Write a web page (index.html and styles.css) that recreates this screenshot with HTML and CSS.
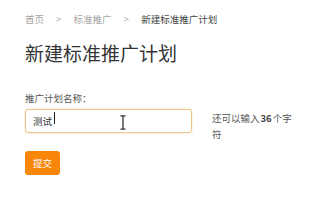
FILE: index.html
```html
<!DOCTYPE html>
<html lang="zh-CN">
<head>
  <meta charset="UTF-8">
  <title>新建标准推广计划</title>
  <link rel="stylesheet" href="styles.css">
</head>
<body>
  <div class="page">
    <div class="crumbs">
      <span class="crumb">首页</span>
      <span class="sep">&gt;</span>
      <span class="crumb">标准推广</span>
      <span class="sep">&gt;</span>
      <span class="crumb current">新建标准推广计划</span>
    </div>

    <h1>新建标准推广计划</h1>

    <form class="plan-form">
      <label class="field-label" for="planName">推广计划名称：</label>
      <div class="field-row">
        <div class="input-wrap">
          <input type="text" id="planName" value="测试">
          <span class="caret"></span>
          <svg class="ibeam" width="6" height="15" viewBox="0 0 6 15">
            <path d="M0.5 0.8 H5.5 M3 0.8 V14.2 M0.5 14.2 H5.5" stroke="#333" stroke-width="1.3" fill="none"/>
          </svg>
        </div>
        <div class="hint">还可以输入<b>36</b>个字<br>符</div>
      </div>
      <button type="button">提交</button>
    </form>
  </div>
</body>
</html>
```

FILE: styles.css
```css
html * {
  font-family: "Microsoft YaHei", "Noto Sans CJK SC", sans-serif;
}

body {
  margin: 0;
  background: #fff;
}

.page {
  padding: 9px 0 0 25px;
}

.crumbs {
  display: flex;
  align-items: center;
  font-size: 9.5px;
  line-height: 20px;
  color: #a5a5a5;
}

.crumbs .sep {
  margin: 0 12px;
  font-size: 10px;
  color: #b0b0b0;
}

.crumbs .current {
  color: #444;
}

h1 {
  margin: 10px 0 0 0;
  font-size: 19px;
  line-height: 28px;
  font-weight: normal;
  color: #333;
}

.plan-form {
  margin-top: 24px;
}

.field-label {
  display: block;
  font-size: 9.5px;
  line-height: 14px;
  color: #555;
}

.field-row {
  display: flex;
  align-items: flex-start;
  margin-top: 1px;
}

.input-wrap {
  position: relative;
}

.input-wrap input {
  box-sizing: border-box;
  width: 167px;
  height: 24px;
  padding: 0 0 0 7px;
  border: 1px solid #eec58a;
  border-radius: 3px;
  box-shadow: 0 0 2px rgba(240, 180, 100, 0.45);
  font-size: 9.5px;
  color: #333;
  outline: none;
  caret-color: transparent;
}

.input-wrap .caret {
  position: absolute;
  left: 29px;
  top: 6px;
  width: 1px;
  height: 12px;
  background: #222;
}

.input-wrap .ibeam {
  position: absolute;
  left: 95px;
  top: 9px;
}

.hint {
  width: 88px;
  margin: 4px 0 0 20px;
  font-size: 9.5px;
  line-height: 16px;
  color: #555;
}

.hint b {
  margin: 0 1px;
  font-weight: bold;
  color: #444;
}

button {
  display: block;
  margin-top: 9px;
  height: 24px;
  padding: 0 8px;
  border: none;
  border-radius: 3px;
  background: #f7860b;
  color: #fff;
  font-size: 9.5px;
}
```
